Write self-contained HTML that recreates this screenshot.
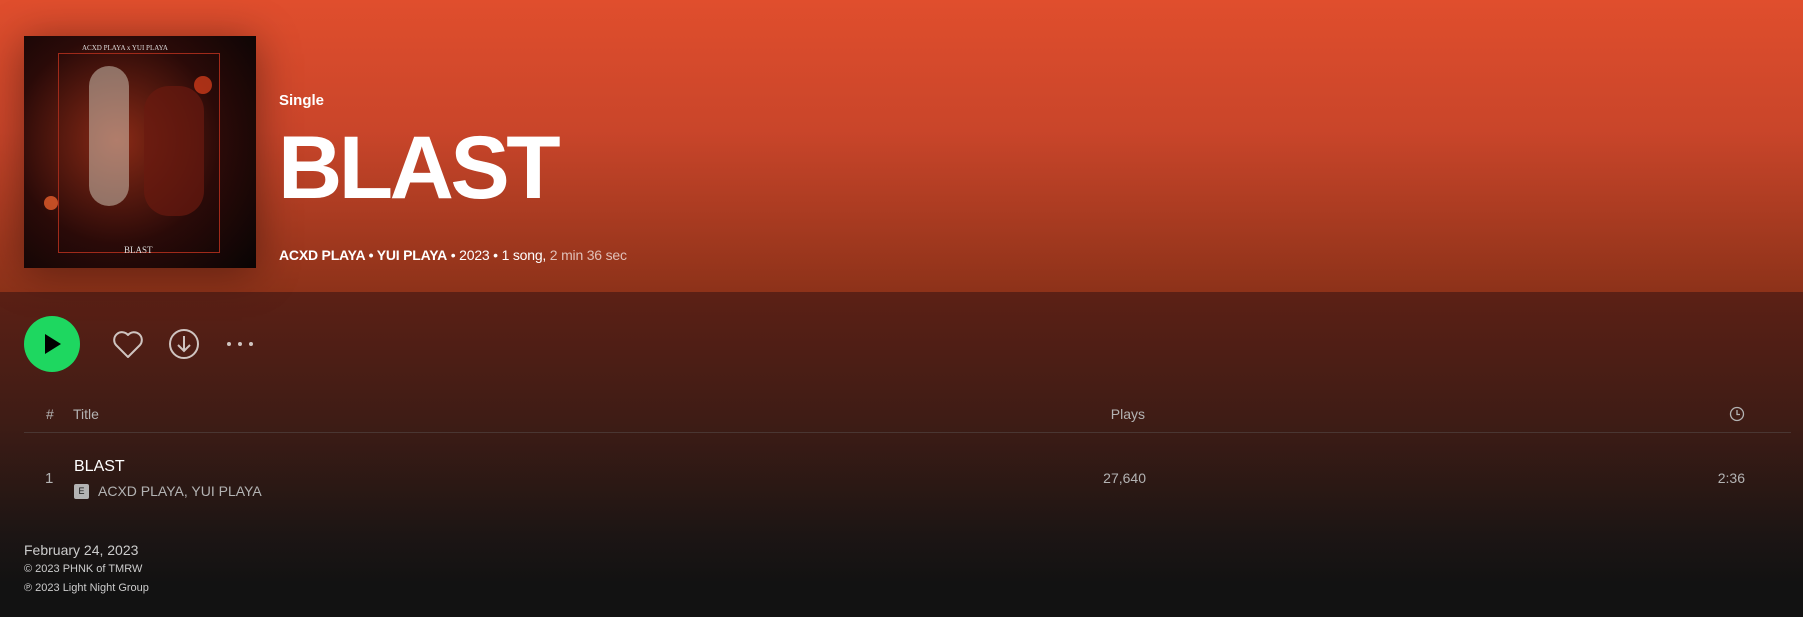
<!DOCTYPE html>
<html><head><meta charset="utf-8"><style>
*{margin:0;padding:0;box-sizing:border-box}
body{width:1803px;height:617px;overflow:hidden;font-family:"Liberation Sans",sans-serif;background:#121212;position:relative;color:#fff}
.top{position:absolute;left:0;top:0;width:1803px;height:292px;background:linear-gradient(#e04e2d,#c9452a 45%,#8d3219)}
.bot{position:absolute;left:0;top:292px;width:1803px;height:325px;background:linear-gradient(#5c2015 0%,#3e1c15 40%,#1c1514 75%,#121212 90%)}
.art{position:absolute;left:24px;top:36px;width:232px;height:232px;background:radial-gradient(circle at 40% 45%,#8a2a16,#2a0a08 55%,#080404);box-shadow:0 4px 40px rgba(0,0,0,.4);overflow:hidden}
.art .fr{position:absolute;left:34px;top:17px;width:162px;height:200px;border:1px solid #a02a1a}
.t{position:absolute;white-space:nowrap}
.g{color:#b3b3b3}
</style></head><body>
<div class="top"></div><div class="bot"></div>
<div class="art"><div class="fr"></div>
<div class="t" style="left:58px;top:8px;font:7px 'Liberation Serif',serif;color:#ddd">ACXD PLAYA x YUI PLAYA</div>
<div class="t" style="left:100px;top:209px;font:9px 'Liberation Serif',serif;color:#ddd">BLAST</div>
<div style="position:absolute;left:65px;top:30px;width:40px;height:140px;background:#d8d0c0;border-radius:20px;opacity:.5"></div>
<div style="position:absolute;left:120px;top:50px;width:60px;height:130px;background:#6a1a10;border-radius:25px;opacity:.7"></div>
<div style="position:absolute;left:20px;top:160px;width:14px;height:14px;background:#ff6a30;border-radius:50%;opacity:.7"></div>
<div style="position:absolute;left:170px;top:40px;width:18px;height:18px;background:#ff4a20;border-radius:50%;opacity:.6"></div>
</div>
<div class="t" style="left:279px;top:92px;font-weight:bold;font-size:15px">Single</div>
<div class="t" style="left:278px;top:117px;font-weight:bold;font-size:89px;letter-spacing:-3.5px;line-height:100px">BLAST</div>
<div class="t" style="left:279px;top:247px;font-size:14px;letter-spacing:-.2px"><b>ACXD PLAYA • YUI PLAYA</b> • 2023 • 1 song, <span style="color:#e0c0b8">2 min 36 sec</span></div>
<svg style="position:absolute;left:0;top:310px" width="270" height="70">
<circle cx="52" cy="34" r="28" fill="#1ed760"/>
<path d="M45 24 L61 34 L45 44Z" fill="#000"/>
<path d="M128 47 L116 35 A7.5 7.5 0 0 1 128 25 A7.5 7.5 0 0 1 140 35Z" fill="none" stroke="#cfc4c0" stroke-width="2" stroke-linejoin="round"/>
<circle cx="184" cy="34" r="14" fill="none" stroke="#cfc4c0" stroke-width="2"/>
<path d="M184 26 V41 M178 35 L184 41 L190 35" fill="none" stroke="#cfc4c0" stroke-width="2"/>
<circle cx="229" cy="34" r="2" fill="#cfc4c0"/><circle cx="240" cy="34" r="2" fill="#cfc4c0"/><circle cx="251" cy="34" r="2" fill="#cfc4c0"/>
</svg>
<div class="t g" style="left:46px;top:406px;font-size:14px">#</div>
<div class="t g" style="left:73px;top:406px;font-size:14px">Title</div>
<div class="t g" style="right:658px;top:406px;font-size:14px">Plays</div>
<svg style="position:absolute;left:1729px;top:406px" width="16" height="16"><circle cx="8" cy="8" r="6.5" fill="none" stroke="#b3b3b3" stroke-width="1.3"/><path d="M8 4V8.5H11" fill="none" stroke="#b3b3b3" stroke-width="1.3"/></svg>
<div style="position:absolute;left:24px;top:432px;width:1767px;height:1px;background:#4a3632"></div>
<div class="t g" style="left:45px;top:470px;font-size:15px">1</div>
<div class="t" style="left:74px;top:458px;font-size:16px">BLAST</div>
<div style="position:absolute;left:74px;top:484px;width:15px;height:15px;background:#b3b3b3;border-radius:2px;color:#121212;font-size:9px;text-align:center;line-height:15px">E</div>
<div class="t g" style="left:98px;top:483px;font-size:14px">ACXD PLAYA, YUI PLAYA</div>
<div class="t g" style="right:657px;top:470px;font-size:14px">27,640</div>
<div class="t g" style="right:58px;top:470px;font-size:14px">2:36</div>
<div class="t" style="left:24px;top:542px;font-size:14px;color:#ccc">February 24, 2023</div>
<div class="t" style="left:24px;top:563px;font-size:11px;color:#ccc">© 2023 PHNK of TMRW</div>
<div class="t" style="left:24px;top:582px;font-size:11px;color:#ccc">℗ 2023 Light Night Group</div>
</body></html>
